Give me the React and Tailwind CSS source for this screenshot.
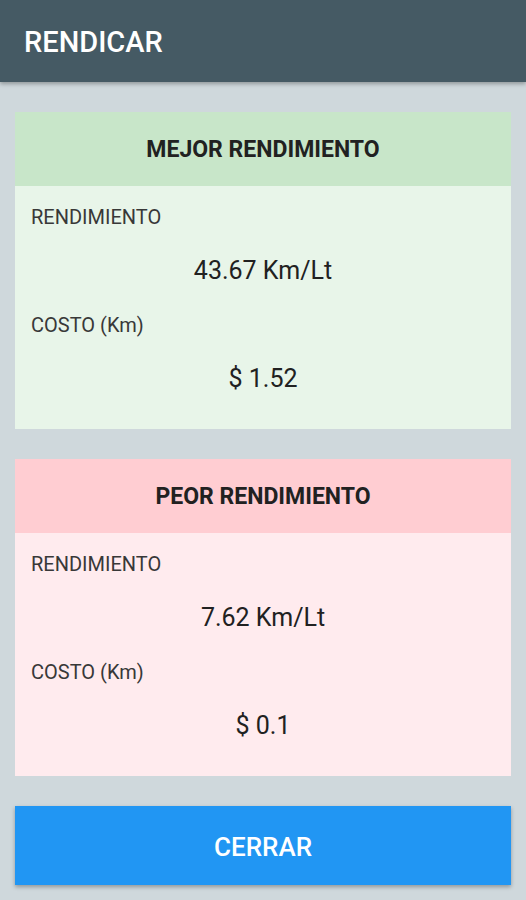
const results = [
  {
    title: 'MEJOR RENDIMIENTO',
    head: 'bg-[#c8e6c9]',
    body: 'bg-[#e8f5e9]',
    rendimiento: '43.67 Km/Lt',
    costo: '$ 1.52',
  },
  {
    title: 'PEOR RENDIMIENTO',
    head: 'bg-[#ffcdd2]',
    body: 'bg-[#ffebee]',
    rendimiento: '7.62 Km/Lt',
    costo: '$ 0.1',
  },
];

const ResultCard = ({ card }) => (
  <div className="flex flex-col">
    <div className={`h-[74px] pt-[3px] flex items-center justify-center ${card.head}`}>
      <span className="text-[23px] font-bold text-[#212121]">{card.title}</span>
    </div>
    <div className={`pt-[7px] pb-[20px] ${card.body}`}>
      <div className="h-[48px] flex items-center px-4 text-[20px] text-[#383838]">RENDIMIENTO</div>
      <div className="h-[60px] flex items-center justify-center text-[25px] text-[#212121]">{card.rendimiento}</div>
      <div className="h-[48px] flex items-center px-4 text-[20px] text-[#383838]">COSTO (Km)</div>
      <div className="h-[60px] flex items-center justify-center text-[25px] text-[#212121]">{card.costo}</div>
    </div>
  </div>
);

const App = () => {
  return (
    <div className="w-[526px] h-[900px] bg-[#cfd8dc] flex flex-col font-['Roboto',sans-serif]">
      {/* Toolbar */}
      <div className="h-[82px] shrink-0 bg-[#455a64] flex items-center px-6 shadow-[0_2px_4px_rgba(0,0,0,0.3)] relative">
        <span className="text-[29px] font-medium text-white mt-[4px]">RENDICAR</span>
      </div>

      <div className="flex flex-col gap-[30px] px-[15px] pt-[30px]">
        {results.map((card) => (
          <ResultCard key={card.title} card={card} />
        ))}

        <button className="h-[79px] w-full pt-[3px] bg-[#2196f3] text-white text-[26px] font-medium shadow-[0_2px_4px_rgba(0,0,0,0.3)]">
          CERRAR
        </button>
      </div>
    </div>
  );
};

export default App;
